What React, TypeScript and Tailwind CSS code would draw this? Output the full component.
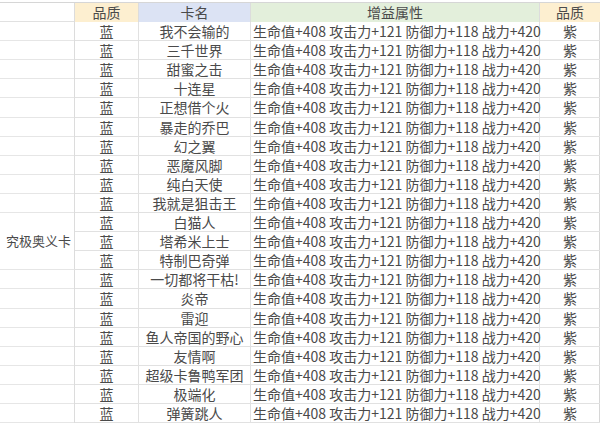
import React from 'react';

const cards = [
  '我不会输的',
  '三千世界',
  '甜蜜之击',
  '十连星',
  '正想借个火',
  '暴走的乔巴',
  '幻之翼',
  '恶魔风脚',
  '纯白天使',
  '我就是狙击王',
  '白猫人',
  '塔希米上士',
  '特制巴奇弹',
  '一切都将干枯!',
  '炎帝',
  '雷迎',
  '鱼人帝国的野心',
  '友情啊',
  '超级卡鲁鸭军团',
  '极端化',
  '弹簧跳人',
];

const stats = '生命值+408 攻击力+121 防御力+118 战力+420';

const font = { fontFamily: '"Microsoft YaHei", "Noto Sans CJK SC", "Noto Sans", sans-serif' };

export default function App() {
  return (
    <div className="w-[603px] h-[427px] bg-white overflow-hidden text-[14px] text-[#4a4a4a]" style={font}>
      <div className="mt-[2px] border-t border-[#d6d6d6] w-[600px] border-r">
        {/* en-tête */}
        <div className="grid grid-cols-[75px_64px_112px_289px_60px] h-[19.1px] leading-[19px] border-b border-[#e1e1e1]">
          <div className="border-r border-[#dcdcdc]"></div>
          <div className="bg-[#fdefd0] text-center border-r border-[#dcdcdc]">品质</div>
          <div className="bg-[#dce3f4] text-center border-r border-[#dcdcdc]">卡名</div>
          <div className="bg-[#e3efdb] text-center border-r border-[#dcdcdc]">增益属性</div>
          <div className="bg-[#fdefd0] text-center">品质</div>
        </div>

        {/* lignes */}
        <div className="grid grid-cols-[75px_64px_112px_289px_60px] grid-rows-[repeat(21,19.1px)]">
          <div className="row-start-1 row-span-10 col-start-1 border-r border-[#dcdcdc] grid grid-rows-[repeat(10,19.1px)]">
            {Array.from({ length: 10 }).map((_, i) => (
              <div key={i} className="border-b border-[#e6e6e6]"></div>
            ))}
          </div>
          <div className="row-start-11 row-span-3 col-start-1 border-r border-b border-[#dcdcdc] border-b-[#e6e6e6] flex items-center pl-[6px] text-[13px]">
            究极奥义卡
          </div>
          <div className="row-start-14 row-span-8 col-start-1 border-r border-[#dcdcdc] grid grid-rows-[repeat(8,19.1px)]">
            {Array.from({ length: 8 }).map((_, i) => (
              <div key={i} className="border-b border-[#e6e6e6]"></div>
            ))}
          </div>

          {cards.map((name, i) => (
            <React.Fragment key={name}>
              <div
                className="col-start-2 text-center leading-[18px] border-r border-b border-[#e1e1e1]"
                style={{ gridRowStart: i + 1 }}
              >
                蓝
              </div>
              <div
                className="col-start-3 text-center leading-[18px] border-r border-b border-[#e1e1e1] whitespace-nowrap"
                style={{ gridRowStart: i + 1 }}
              >
                {name}
              </div>
              <div
                className="col-start-4 pl-[2px] leading-[18px] border-r border-b border-[#e1e1e1] whitespace-nowrap"
                style={{ gridRowStart: i + 1 }}
              >
                {stats}
              </div>
              <div
                className="col-start-5 text-center leading-[18px] border-b border-[#e1e1e1]"
                style={{ gridRowStart: i + 1 }}
              >
                紫
              </div>
            </React.Fragment>
          ))}
        </div>
      </div>
    </div>
  );
}
